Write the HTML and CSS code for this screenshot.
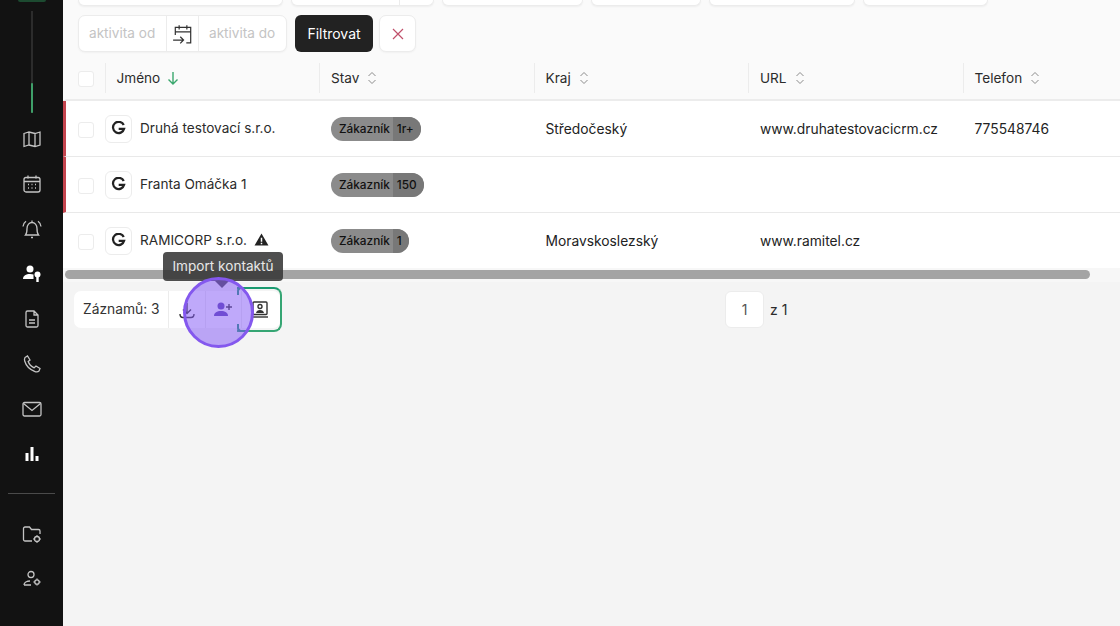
FILE: index.html
```html
<!DOCTYPE html>
<html>
<head>
    <title>Kontakty</title>
    <link rel="stylesheet" href="styles.css">
</head>
<body>
    <nav class="sidebar">
        <div class="brand"></div>
        <div class="rail"><div class="rail-fill"></div></div>
        <div class="nav-list">
            <a class="nav-item"><svg viewBox="0 0 20 20"><path d="M2 4.500 7 3l6 1.500L18 3v13l-5 1.500L7 16l-5 1.500zM7 3v13M13 4.500v13"/></svg></a>
            <a class="nav-item"><svg viewBox="0 0 20 20"><rect x="2" y="3.500" width="16" height="14.500" rx="2"/><path d="M2 7.500h16M6 1.500v3M14 1.500v3M6 10.500h1M9.500 10.500h1M13 10.500h1M6 14h1M9.500 14h1M13 14h1"/></svg></a>
            <a class="nav-item"><svg viewBox="0 0 20 20"><path d="M3.500 16c1.300-1.500 1.500-3 1.500-6.500C5 6 7.300 3.500 10 3.500s5 2.500 5 6c0 3.500.2 5 1.500 6.500zM9 18.500h2M10 1.500v2M1 7.500C1.300 5 2.500 3.300 4 2.300M19 7.500c-.3-2.500-1.500-4.200-3-5.200"/></svg></a>
            <a class="nav-item active"><svg viewBox="0 0 20 20"><circle cx="8" cy="5" r="3.500" class="solid"/><path class="solid" d="M1 15c0-3.500 3-5 7-5 1.500 0 2.500.2 3.500.6V15z"/><circle cx="15.500" cy="10.500" r="3" class="solid"/><path d="M15.500 12v6" class="thick"/></svg></a>
            <a class="nav-item"><svg viewBox="0 0 20 20"><path d="M4 3.500A1.500 1.500 0 0 1 5.500 2H12l4 4v10.500a1.500 1.500 0 0 1-1.500 1.500h-9A1.500 1.500 0 0 1 4 16.500zM12 2v4h4M7 11h6M7 14h6"/></svg></a>
            <a class="nav-item"><svg viewBox="0 0 20 20"><path d="M3 3.500 5.500 2 8 6 6.200 7.500c.8 2.500 3 5 6 6.300L14 12l4 2.500-1 2.500c-1 1-3 1-4.500.3C8 15.500 4 11.500 2.700 7 2.300 5.700 2.400 4.500 3 3.500z"/></svg></a>
            <a class="nav-item"><svg viewBox="0 0 20 20"><rect x="1" y="3.500" width="18" height="13.500" rx="1.500"/><path d="m1.500 4.500 8.500 7 8.500-7"/></svg></a>
            <a class="nav-item active"><svg viewBox="0 0 20 20"><path class="solid" d="M3.500 9h3v8h-3zM8.500 3h3v14h-3zM13.500 12h3v5h-3z"/></svg></a>
            <div class="nav-divider"></div>
            <a class="nav-item"><svg viewBox="0 0 20 20"><path d="M10 17H3a1.500 1.500 0 0 1-1.500-1.500v-11A1.500 1.500 0 0 1 3 3h4.500l2 2.500h7A1.500 1.500 0 0 1 18 7v3"/><circle cx="15" cy="15" r="2.500"/><path d="M15 11.300v1.200M15 17.500v1.200M11.300 15h1.200M17.500 15h1.200"/></svg></a>
            <a class="nav-item"><svg viewBox="0 0 20 20"><circle cx="9" cy="5.500" r="3"/><path d="M2 16c0-2.500 3-4 6-4M2 16h7"/><circle cx="15" cy="13" r="2.200"/><path d="M15 9.500v1.300M15 15.200v1.300M11.500 13h1.300M17.200 13h1.300"/></svg></a>
        </div>
    </nav>

    <main class="main">
        <div class="panel">
            <div class="filters">
                <div class="filter-row">
                    <div class="field w205"></div>
                    <div class="field w143 split"></div>
                    <div class="field w141"></div>
                    <div class="field w110"></div>
                    <div class="field w146"></div>
                    <div class="field w125"></div>
                </div>
                <div class="filter-row">
                    <div class="date-range">
                        <span class="date-input">aktivita od</span>
                        <span class="date-icon"><svg viewBox="0 0 20 20"><path d="M3 11V4h14v14h-4M3 8h14M6.500 2v4M13.500 2v4M1 15.500h9M7.500 12.500l3 3-3 3"/></svg></span>
                        <span class="date-input">aktivita do</span>
                    </div>
                    <button class="btn-dark">Filtrovat</button>
                    <button class="btn-clear"><svg viewBox="0 0 12 12"><path d="m1 1 10 10M11 1 1 11"/></svg></button>
                </div>
            </div>

            <div class="table">
                <div class="row head">
                    <div class="cell-check"><span class="check"></span></div>
                    <div class="cell">Jméno <svg class="arrow" viewBox="0 0 12 14"><path d="M6 1v12M1.500 8.500 6 13l4.500-4.500"/></svg></div>
                    <div class="cell">Stav <svg class="sort" viewBox="0 0 10 14"><path d="m1.500 5 3.500-3.500L8.500 5M1.500 9 5 12.500 8.500 9"/></svg></div>
                    <div class="cell">Kraj <svg class="sort" viewBox="0 0 10 14"><path d="m1.500 5 3.500-3.500L8.500 5M1.500 9 5 12.500 8.500 9"/></svg></div>
                    <div class="cell">URL <svg class="sort" viewBox="0 0 10 14"><path d="m1.500 5 3.500-3.500L8.500 5M1.500 9 5 12.500 8.500 9"/></svg></div>
                    <div class="cell">Telefon <svg class="sort" viewBox="0 0 10 14"><path d="m1.500 5 3.500-3.500L8.500 5M1.500 9 5 12.500 8.500 9"/></svg></div>
                </div>

                <div class="row flagged">
                    <div class="cell-check"><span class="check"></span></div>
                    <div class="cell name-cell"><span class="g-logo"><svg viewBox="0 0 16 16"><path d="M13.600 4.300A6 6 0 1 0 14 8.300H8.200"/></svg></span><span class="name">Druhá testovací s.r.o.</span></div>
                    <div class="cell"><span class="badge"><span class="badge-label">Zákazník</span><span class="badge-count">1r+</span></span></div>
                    <div class="cell plain">Středočeský</div>
                    <div class="cell plain">www.druhatestovacicrm.cz</div>
                    <div class="cell plain">775548746</div>
                </div>

                <div class="row flagged">
                    <div class="cell-check"><span class="check"></span></div>
                    <div class="cell name-cell"><span class="g-logo"><svg viewBox="0 0 16 16"><path d="M13.600 4.300A6 6 0 1 0 14 8.300H8.200"/></svg></span><span class="name">Franta Omáčka 1</span></div>
                    <div class="cell"><span class="badge"><span class="badge-label">Zákazník</span><span class="badge-count">150</span></span></div>
                    <div class="cell"></div>
                    <div class="cell"></div>
                    <div class="cell"></div>
                </div>

                <div class="row last">
                    <div class="cell-check"><span class="check"></span></div>
                    <div class="cell name-cell"><span class="g-logo"><svg viewBox="0 0 16 16"><path d="M13.600 4.300A6 6 0 1 0 14 8.300H8.200"/></svg></span><span class="name">RAMICORP s.r.o.</span><svg class="warn" viewBox="0 0 16 14"><path fill-rule="evenodd" d="M8 .5 15.500 13.500H.5zM7.200 5v4.500h1.600V5zM7.200 10.500V12h1.600v-1.500z"/></svg></div>
                    <div class="cell"><span class="badge"><span class="badge-label">Zákazník</span><span class="badge-count">1</span></span></div>
                    <div class="cell plain">Moravskoslezský</div>
                    <div class="cell plain">www.ramitel.cz</div>
                    <div class="cell"></div>
                </div>
            </div>

            <div class="scroll-track"><div class="scroll-thumb"></div></div>
        </div>

        <div class="footer">
            <div class="tools">
                <span class="count">Záznamů: 3</span>
                <span class="tool"><svg viewBox="0 0 20 20"><path d="M10 3v10M6 9.500l4 4 4-4M3 14c0 2 1 3.500 3 3.500h8c2 0 3-1.500 3-3.500"/></svg></span>
                <span class="tool"><svg viewBox="0 0 20 20"><circle cx="8" cy="6" r="3.500" class="fill"/><path class="fill" d="M1 16c0-3.500 3-5 7-5s7 1.500 7 5z"/><path d="M16 4v6M13 7h6"/></svg></span>
                <span class="tool"><svg viewBox="0 0 20 20"><rect x="3" y="2" width="14" height="12.500" rx="1"/><circle cx="10" cy="6.500" r="2"/><path class="dark" d="M6 13c.3-2 2-3 4-3s3.700 1 4 3z"/><path d="M2 17h16"/></svg></span>
            </div>
            <div class="pager">
                <span class="page-box">1</span>
                <span>z 1</span>
            </div>
        </div>

        <div class="focus-box"></div>
        <div class="tooltip">Import kontaktů</div>
        <div class="tooltip-arrow"></div>
        <div class="click-mark"></div>
    </main>
</body>
</html>
```

FILE: styles.css
```css
* {
    box-sizing: border-box;
}

html,
body {
    height: 100%;
    margin: 0;
    overflow: hidden;
}

body {
    display: flex;
    font-family: Inter, "Liberation Sans", sans-serif;
    font-size: 14px;
    color: #2b2b2b;
    background-color: #f4f4f4;
}

/* sidebar */
.sidebar {
    width: 63px;
    flex: none;
    height: 626px;
    background-color: #121212;
    display: flex;
    flex-direction: column;
    align-items: center;
}

.brand {
    width: 28px;
    height: 2px;
    background-color: #1c4a30;
    border-radius: 0 0 4px 4px;
}

.rail {
    width: 2px;
    height: 102px;
    margin-top: 9px;
    background-color: #2c2c2c;
    display: flex;
    flex-direction: column;
    justify-content: flex-end;
}

.rail-fill {
    height: 30px;
    background-color: #3f9f69;
    border-radius: 1px;
}

.nav-list {
    width: 100%;
    margin-top: 3px;
    display: flex;
    flex-direction: column;
    align-items: center;
}

.nav-item {
    height: 45px;
    display: flex;
    align-items: center;
    justify-content: center;
}

.nav-item svg {
    width: 20px;
    height: 20px;
    fill: none;
    stroke: #c4c4c4;
    stroke-width: 1.3;
}

.nav-item.active svg {
    stroke: #fff;
}

.nav-item .solid {
    fill: #fff;
    stroke: none;
}

.nav-item .thick {
    stroke-width: 2.4;
}

.nav-divider {
    width: 47px;
    height: 1px;
    margin: 17px 0;
    background-color: #4a4a4a;
}

/* main area */
.main {
    flex: 1;
    min-width: 0;
    position: relative;
}

.panel {
    height: 282px;
    background-color: #fafafa;
    overflow: hidden;
}

.filters {
    padding: 0 15px;
}

.filter-row {
    display: flex;
    gap: 8px;
}

.filter-row:first-child {
    height: 6px;
    margin-bottom: 9px;
}

.field {
    height: 6px;
    background-color: #fff;
    border: 1px solid #ececec;
    border-top: none;
    border-radius: 0 0 7px 7px;
    box-shadow: 0 1px 2px rgba(0, 0, 0, 0.05);
}

.w205 { width: 205px; }
.w143 { width: 143px; }
.w141 { width: 141px; }
.w110 { width: 110px; }
.w146 { width: 146px; }
.w125 { width: 125px; }

.split {
    background: linear-gradient(#ececec, #ececec) no-repeat 107px 0 / 1px 100%, #fff;
}

.date-range {
    width: 209px;
    height: 37px;
    display: flex;
    background-color: #fff;
    border: 1px solid #ececec;
    border-radius: 7px;
    box-shadow: 0 1px 2px rgba(0, 0, 0, 0.04);
}

.date-input {
    flex: 1;
    line-height: 34px;
    padding-left: 10px;
    font-size: 13.6px;
    color: #c4c4c4;
}

.date-icon {
    width: 33px;
    flex: none;
    display: flex;
    align-items: center;
    justify-content: center;
    border-left: 1px solid #ececec;
    border-right: 1px solid #ececec;
}

.date-icon svg {
    width: 22px;
    height: 22px;
    fill: none;
    stroke: #333;
    stroke-width: 1.1;
}

.btn-dark {
    width: 78px;
    height: 37px;
    padding: 0 0 1px;
    border: none;
    border-radius: 6px;
    background-color: #222;
    color: #fff;
    font: inherit;
}

.btn-clear {
    width: 37px;
    height: 37px;
    margin-left: -2px;
    padding: 0;
    display: flex;
    align-items: center;
    justify-content: center;
    background-color: #fff;
    border: 1px solid #ececec;
    border-radius: 7px;
    box-shadow: 0 1px 2px rgba(0, 0, 0, 0.04);
}

.btn-clear svg {
    width: 12px;
    height: 12px;
    fill: none;
    stroke: #c0506a;
    stroke-width: 1.2;
}

/* table */
.table {
    width: 1120px;
}

.row {
    display: flex;
    align-items: center;
    height: 56px;
    background-color: #fff;
    border-bottom: 1px solid #e9e9e9;
    border-left: 3px solid transparent;
}

.row.head {
    height: 42px;
    margin-top: 7px;
    padding-bottom: 2px;
    background-color: #fafafa;
    border-bottom: 2px solid #ececec;
}

.row.flagged {
    border-left-color: #c4444e;
}

.row.last {
    height: 55px;
    border-bottom: none;
}

.cell-check {
    width: 38.5px;
    flex: none;
    padding: 2px 0 0 12px;
    display: flex;
}

.check {
    width: 16px;
    height: 16px;
    background-color: #fff;
    border: 1px solid #ececec;
    border-radius: 3px;
}

.cell {
    width: 214.5px;
    flex: none;
    padding-left: 12px;
    display: flex;
    align-items: center;
    gap: 5px;
    white-space: nowrap;
}

.head .cell {
    height: 30px;
    padding-left: 11px;
    border-left: 1px solid #ececec;
    font-size: 13.6px;
}

.cell.plain {
    font-size: 13.8px;
    color: #222;
}

.name-cell {
    padding-left: 0;
    gap: 8px;
}

.name {
    font-size: 13.6px;
    margin-top: -2px;
}

.g-logo {
    width: 27px;
    height: 28px;
    margin-left: 0.5px;
    display: flex;
    align-items: center;
    justify-content: center;
    background-color: #fff;
    border: 1px solid #ececec;
    border-radius: 6px;
}

.g-logo svg {
    width: 15px;
    height: 15px;
    fill: none;
    stroke: #222;
    stroke-width: 2.4;
}

.warn {
    width: 15px;
    height: 13px;
    margin: -2px 0 0 -1px;
    fill: #222;
}

.arrow {
    width: 12px;
    height: 14px;
    margin-left: 2px;
    fill: none;
    stroke: #3aa76d;
    stroke-width: 1.4;
}

.sort {
    width: 10px;
    height: 14px;
    margin-left: 3px;
    fill: none;
    stroke: #8c8c8c;
    stroke-width: 1;
}

.badge {
    height: 24px;
    display: flex;
    align-items: center;
    border-radius: 12px;
    overflow: hidden;
    background-color: #8b8b8b;
    color: #111;
    font-size: 11.8px;
    font-weight: 500;
}

.badge-label {
    padding: 0 3px 0 8px;
}

.badge-count {
    height: 24px;
    line-height: 24px;
    padding: 0 7px 0 4px;
    background-color: #787878;
}

.scroll-track {
    height: 14px;
    padding: 2px 30px 3px 2px;
    background-color: #f7f7f7;
}

.scroll-thumb {
    height: 9px;
    background-color: #a4a4a4;
    border-radius: 5px;
}

/* footer */
.footer {
    position: relative;
    height: 60px;
    padding-top: 9px;
}

.tools {
    width: 206px;
    height: 37px;
    margin-left: 11px;
    display: flex;
    background-color: #fff;
    border-radius: 7px;
}

.count {
    width: 94px;
    flex: none;
    line-height: 37px;
    padding-left: 9px;
    font-size: 13.8px;
    color: #333;
}

.tool {
    width: 36.5px;
    flex: none;
    display: flex;
    align-items: center;
    justify-content: center;
    border-left: 1px solid #ececec;
}

.tool svg {
    width: 20px;
    height: 20px;
    fill: none;
    stroke: #333;
    stroke-width: 1.4;
}

.tool .fill {
    fill: #5b3fb0;
    stroke: none;
}

.tool .dark {
    fill: #333;
    stroke: none;
}

.pager {
    position: absolute;
    top: 9px;
    left: 662px;
    display: flex;
    align-items: center;
    gap: 6px;
}

.page-box {
    width: 39px;
    height: 37px;
    line-height: 35px;
    text-align: center;
    background-color: #fff;
    border: 1px solid #ececec;
    border-radius: 6px;
    color: #555;
}

/* overlays: the guide highlight on top of the toolbar */
.focus-box {
    position: absolute;
    left: 174px;
    top: 287px;
    width: 45px;
    height: 45px;
    border: 2px solid #35a573;
    border-left: none;
    border-top-color: #1a9a70;
    border-radius: 0 8px 8px 0;
}

.focus-box::before,
.focus-box::after {
    content: "";
    position: absolute;
    left: 0;
    width: 7px;
    height: 6px;
    border-left: 2px solid #1a9a70;
}

.focus-box::before {
    top: -2px;
    border-top: 2px solid #1a9a70;
    border-radius: 4px 0 0 0;
}

.focus-box::after {
    bottom: -2px;
    border-bottom: 2px solid #1a9a70;
    border-radius: 0 0 0 4px;
}

.tooltip {
    position: absolute;
    left: 100px;
    top: 252px;
    width: 120px;
    height: 29px;
    line-height: 29px;
    text-align: center;
    background-color: rgba(55, 55, 55, 0.88);
    color: #e8e8e8;
    font-size: 13.6px;
    border-radius: 4px;
}

.tooltip-arrow {
    position: absolute;
    left: 152px;
    top: 281px;
    border-left: 7px solid transparent;
    border-right: 7px solid transparent;
    border-top: 7px solid #444;
}

.click-mark {
    position: absolute;
    left: 119.7px;
    top: 277px;
    width: 71px;
    height: 71px;
    border: 3px solid #8458ee;
    border-radius: 50%;
    background-color: rgba(133, 90, 245, 0.52);
}
```
